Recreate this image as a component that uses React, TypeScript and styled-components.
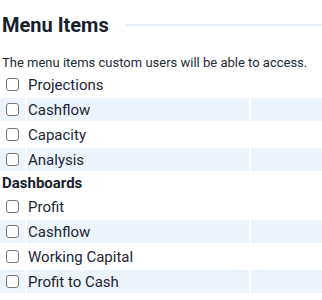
import React from "react";
import styled, { createGlobalStyle } from "styled-components";

const Global = createGlobalStyle`
  html, body { margin: 0; padding: 0; background: #fff; }
  body { font-family: Roboto, "Noto Sans", Arial, sans-serif; color: #1b2633; }
`;

const Page = styled.div`
  width: 322px;
  display: flex;
  flex-direction: column;
`;

const TitleRow = styled.div`
  display: flex;
  align-items: center;
  gap: 16px;
  height: 50px;
  padding-left: 2px;
`;

const Title = styled.h2`
  margin: 0;
  font-size: 20px;
  font-weight: 700;
  color: #17212d;
  white-space: nowrap;
`;

const Rule = styled.div`
  flex: 1;
  height: 2px;
  background: #e8eef8;
`;

const Description = styled.p`
  margin: 0;
  padding: 3px 0 0 2px;
  font-size: 13px;
  line-height: 20px;
  color: #222b35;
`;

const SectionHeading = styled.div`
  font-size: 15px;
  font-weight: 700;
  padding: 3px 0 2px 2px;
  line-height: 19px;
  color: #17212d;
`;

const Grid = styled.div`
  display: grid;
  grid-template-columns: 25px 222px 1fr;
  gap: 2px;
`;

const Cell = styled.div<{ $shaded: boolean }>`
  height: 23px;
  display: flex;
  align-items: center;
  background: ${(p) => (p.$shaded ? "#eef4fc" : "transparent")};
`;

const BoxCell = styled(Cell)`
  justify-content: center;
`;

const Label = styled(Cell)`
  padding-left: 1px;
  font-size: 15px;
  color: #1b2633;
`;

const Box = styled.input.attrs({ type: "checkbox" })`
  appearance: none;
  margin: 0;
  width: 13px;
  height: 13px;
  border: 1.5px solid #767676;
  border-radius: 3px;
  background: #fff;
  box-sizing: border-box;
`;

const menuItems = ["Projections", "Cashflow", "Capacity", "Analysis"];
const dashboards = ["Profit", "Cashflow", "Working Capital", "Profit to Cash"];

function Rows({ items }: { items: string[] }) {
  return (
    <Grid>
      {items.map((item, i) => {
        const shaded = i % 2 === 1;
        return (
          <React.Fragment key={item}>
            <BoxCell $shaded={shaded}>
              <Box />
            </BoxCell>
            <Label $shaded={shaded}>{item}</Label>
            <Cell $shaded={shaded} />
          </React.Fragment>
        );
      })}
    </Grid>
  );
}

export default function App() {
  return (
    <Page>
      <Global />
      <TitleRow>
        <Title>Menu Items</Title>
        <Rule />
      </TitleRow>
      <Description>The menu items custom users will be able to access.</Description>
      <Rows items={menuItems} />
      <SectionHeading>Dashboards</SectionHeading>
      <Rows items={dashboards} />
    </Page>
  );
}
